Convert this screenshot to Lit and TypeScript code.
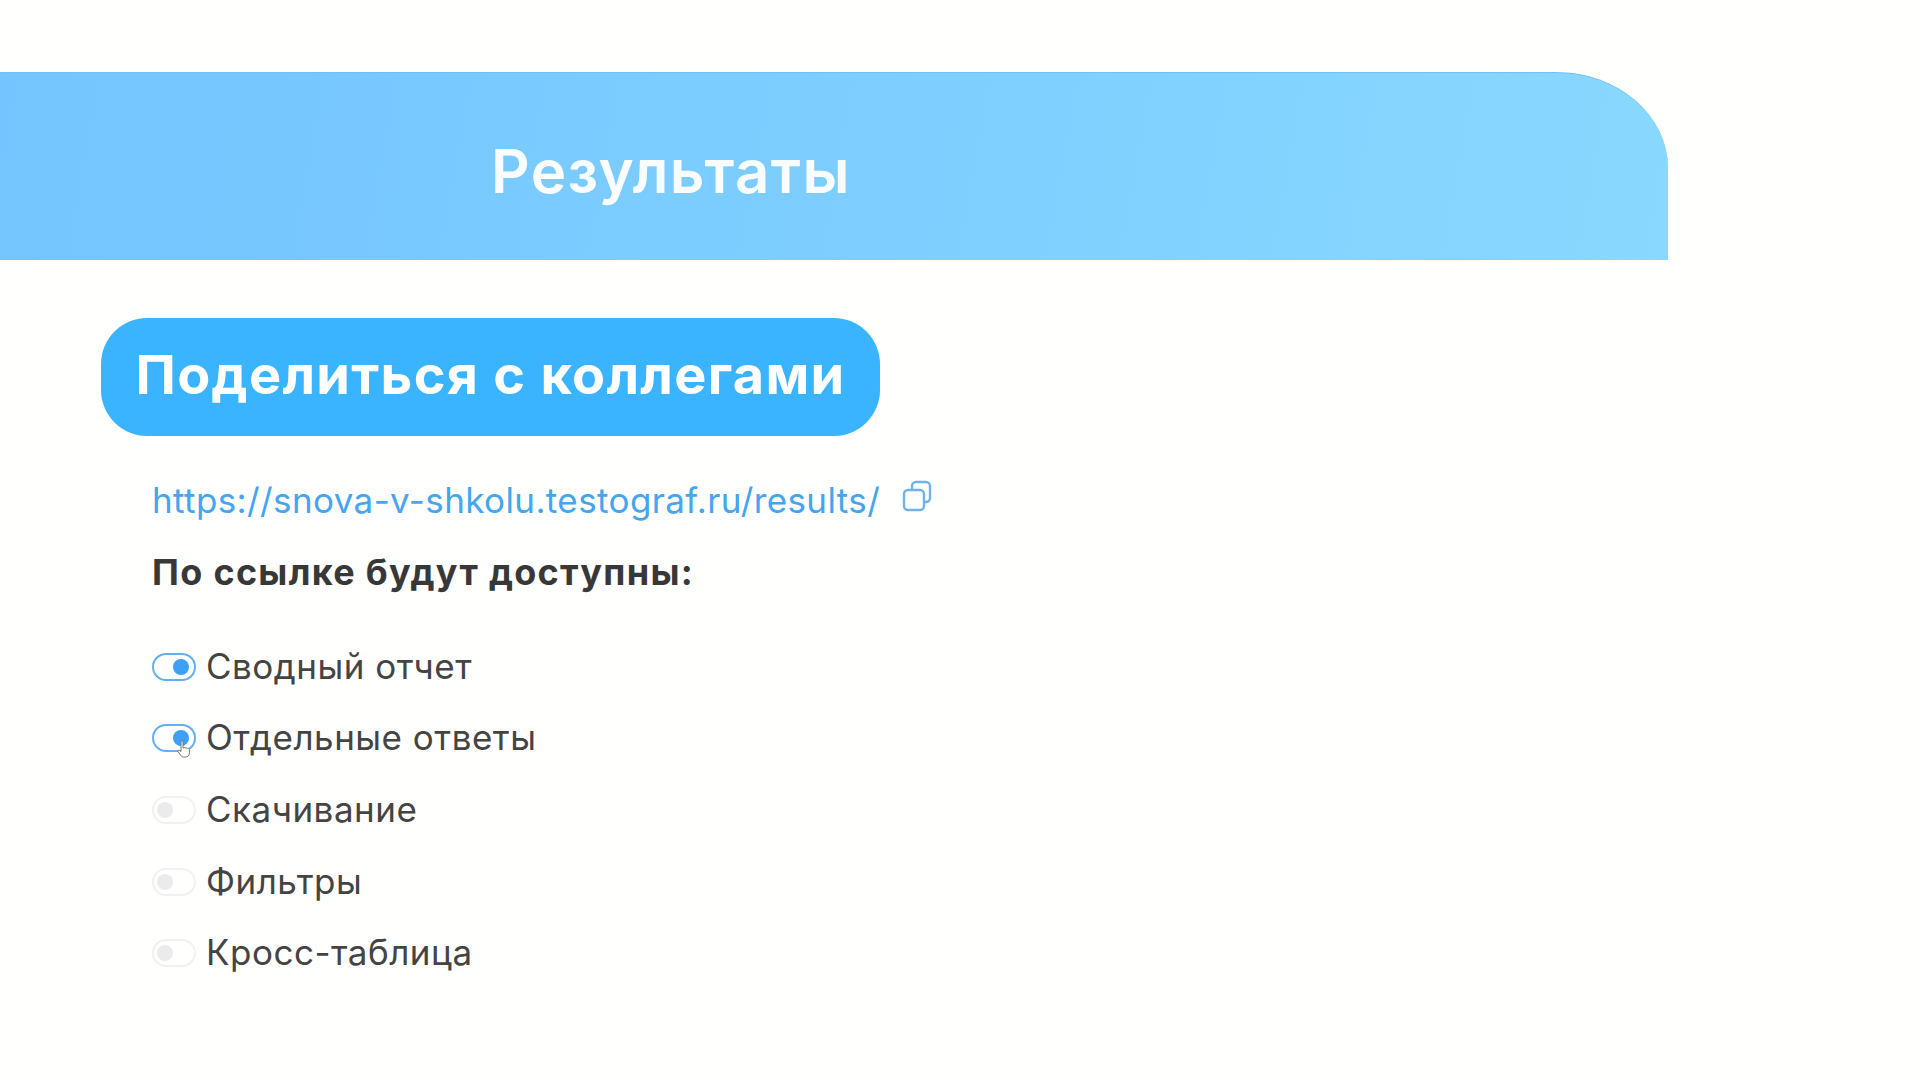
import {LitElement, html, css} from 'lit';
import {customElement} from 'lit/decorators.js';

const OPTIONS = [
  {label: 'Сводный отчет', on: true},
  {label: 'Отдельные ответы', on: true, cursor: true},
  {label: 'Скачивание', on: false},
  {label: 'Фильтры', on: false},
  {label: 'Кросс-таблица', on: false},
];

@customElement('app-root')
export class AppRoot extends LitElement {
  static override styles = css`
    :host {
      display: block;
      width: 1920px;
      height: 1080px;
      overflow: hidden;
      background: #fffffd;
      font-family: Inter, 'Noto Sans', sans-serif;
      color: #3c3c3c;
    }
    .banner {
      box-sizing: border-box;
      display: flex;
      align-items: center;
      width: 1668px;
      height: 188px;
      margin-top: 72px;
      padding: 0 0 0 491px;
      border-top: 1px solid #74bffa;
      border-top-right-radius: 112px 96px;
      background: linear-gradient(100deg, #74c4ff 0%, #7dceff 50%, #88d8ff 100%);
    }
    .title {
      font-size: 60px;
      font-weight: 600;
      color: #fafdff;
      margin-top: 8px;
      letter-spacing: 1.4px;
    }
    .share {
      box-sizing: border-box;
      display: flex;
      align-items: center;
      justify-content: center;
      width: 779px;
      height: 118px;
      margin: 58px 0 0 101px;
      padding-bottom: 5px;
      border-radius: 46px;
      background: #3bb4ff;
      color: #fff;
      font-size: 54px;
      font-weight: 700;
      letter-spacing: 1.3px;
    }
    .content {
      padding: 39px 0 0 152px;
    }
    .link-row {
      display: flex;
      align-items: center;
      gap: 22px;
      height: 50px;
    }
    .link {
      color: #45a5ee;
      font-size: 35px;
      letter-spacing: 0.39px;
    }
    .copy {
      display: block;
      margin-top: -8px;
    }
    .heading {
      margin: 22px 0 0;
      font-size: 36px;
      line-height: 50px;
      font-weight: 700;
      color: #383838;
      letter-spacing: 1.3px;
    }
    .options {
      display: flex;
      flex-direction: column;
      margin-top: 33px;
    }
    .option {
      display: flex;
      align-items: center;
      gap: 10px;
      height: 71.6px;
      font-size: 35px;
      color: #444;
      letter-spacing: 0.5px;
    }
    .toggle {
      position: relative;
      box-sizing: border-box;
      display: flex;
      align-items: center;
      justify-content: flex-start;
      width: 44px;
      height: 28px;
      margin-top: 2px;
      padding: 0 3px;
      border: 2px solid #f1f1f0;
      border-radius: 14px;
    }
    .toggle.on {
      justify-content: flex-end;
      padding: 0 5px;
      border-color: #62b0f2;
      background: #fff;
    }
    .knob {
      width: 16px;
      height: 16px;
      border-radius: 50%;
      background: #ebebeb;
    }
    .toggle.on .knob {
      background: #3f9ff5;
    }
    .cursor {
      position: absolute;
      left: 23px;
      top: 14px;
    }
  `;

  override render() {
    return html`
      <div class="banner"><div class="title">Результаты</div></div>
      <div class="share">Поделиться с коллегами</div>
      <div class="content">
        <div class="link-row">
          <span class="link">https://snova-v-shkolu.testograf.ru/results/</span>
          <svg class="copy" width="30" height="32" viewBox="0 0 30 32" fill="none" stroke="#6fb3ea" stroke-width="2.4">
            <rect x="10" y="2" width="18" height="20" rx="4"></rect>
            <rect x="2" y="10" width="20" height="20" rx="4" fill="#fffffd"></rect>
          </svg>
        </div>
        <p class="heading">По ссылке будут доступны:</p>
        <div class="options">
          ${OPTIONS.map(
            (o) => html`
              <div class="option">
                <span class="toggle ${o.on ? 'on' : ''}">
                  <span class="knob"></span>
                  ${o.cursor
                    ? html`<svg class="cursor" width="14" height="18" viewBox="0 0 14 18" fill="#fff" stroke="#777" stroke-width="1" stroke-linejoin="round">
                        <path d="M4 1.5c.8-.8 2-.3 2 .8V8l1-.4c.8-.2 1.400.1 1.700.5.9-.4 1.600-.2 2 .4.9-.2 1.700.3 1.700 1.300v3.200c0 2.200-1.400 4-3.600 4H6.500c-1.300 0-2.200-.6-2.900-1.700L1 11.500c-.4-.8.5-1.700 1.400-1.200L4 11.500V2z"></path>
                      </svg>`
                    : ''}
                </span>
                <span>${o.label}</span>
              </div>
            `
          )}
        </div>
      </div>
    `;
  }
}

declare global {
  interface HTMLElementTagNameMap {
    'app-root': AppRoot;
  }
}
